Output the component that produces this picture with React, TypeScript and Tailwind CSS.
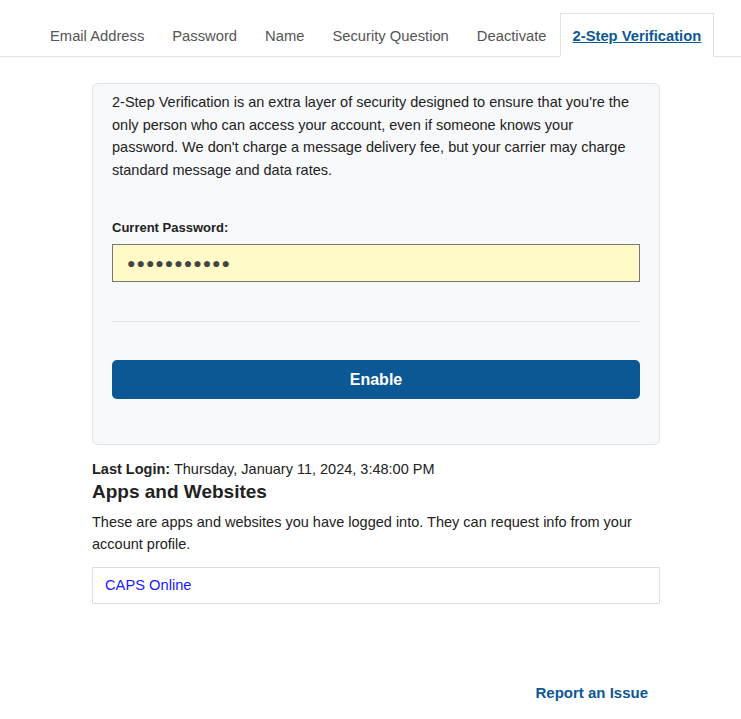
import React from "react";

const tabs = ["Email Address", "Password", "Name", "Security Question", "Deactivate"];

export default function App() {
  return (
    <div className="min-h-screen bg-white text-[#222] font-['Liberation_Sans',Arial,sans-serif]">
      {/* tabs */}
      <div className="flex items-end border-b border-[#e2e2e2] pl-[36px] pt-[13px]">
        {tabs.map((t) => (
          <a key={t} className="px-[14px] pt-[13px] pb-[11px] text-[14.75px] leading-[20px] text-[#555] -mb-px">
            {t}
          </a>
        ))}
        <a className="-ml-px px-[12px] pt-[12px] pb-[10px] text-[14.75px] leading-[20px] font-bold text-[#0b5895] underline bg-white border border-[#e2e2e2] border-b-white -mb-px">
          2-Step Verification
        </a>
      </div>

      <div className="w-[568px] ml-[92px]">
        {/* card */}
        <div className="mt-[26px] rounded-[6px] border border-[#e0e2e6] bg-[#f8f9fb] px-[19px] pt-[7px] pb-[45px]">
          <p className="text-[14.5px] leading-[22.5px] text-[#222]">
            2-Step Verification is an extra layer of security designed to ensure that you're the only person who can access your account, even if someone knows your password. We don't charge a message delivery fee, but your carrier may charge standard message and data rates.
          </p>
          <label className="block mt-[39px] text-[13px] font-bold leading-[16px] text-[#222]">Current Password:</label>
          <div className="mt-[8px] h-[38px] border border-[#777] bg-[#fffac8] flex items-center pl-[14px] text-[#444] text-[14px] tracking-[1px]">
            ●●●●●●●●●●●
          </div>
          <div className="mt-[39px] border-t border-[#e3e6ea]" />
          <button className="mt-[38px] w-full h-[39px] rounded-[5px] bg-[#0b5895] text-white text-[16px] font-bold">
            Enable
          </button>
        </div>

        <p className="mt-[15px] text-[14.5px] leading-[18px]">
          <span className="font-bold">Last Login:</span> Thursday, January 11, 2024, 3:48:00 PM
        </p>
        <h2 className="mt-[2px] text-[19px] font-bold leading-[24px] text-[#222]">Apps and Websites</h2>
        <p className="mt-[7px] text-[14.5px] leading-[22px] text-[#222]">
          These are apps and websites you have logged into. They can request info from your account profile.
        </p>
        <div className="mt-[12px] border border-[#dedede] h-[37px] flex items-center px-[12px]">
          <a className="text-[14.7px] text-[#1a1aff]">CAPS Online</a>
        </div>

        <div className="mt-[78px] flex justify-end pr-[12px]">
          <a className="text-[15px] font-bold text-[#0b5895]">Report an Issue</a>
        </div>
      </div>
    </div>
  );
}
